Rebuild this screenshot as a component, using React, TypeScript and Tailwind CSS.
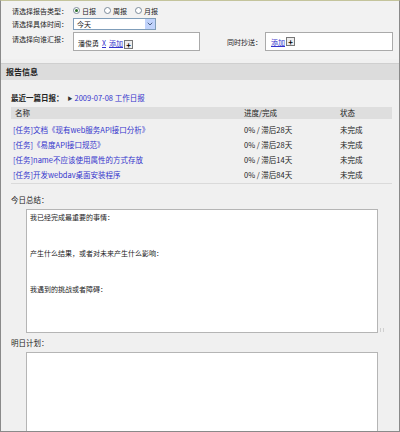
import { ChevronDown } from "lucide-react";

const TASKS = [
  { name: "[任务]文档《现有web服务API接口分析》", progress: "0% / 滞后28天", status: "未完成" },
  { name: "[任务]《易度API接口规范》", progress: "0% / 滞后28天", status: "未完成" },
  { name: "[任务]name不应该使用属性的方式存放", progress: "0% / 滞后14天", status: "未完成" },
  { name: "[任务]开发webdav桌面安装程序", progress: "0% / 滞后84天", status: "未完成" },
];

function Radio({ checked, label }: { checked?: boolean; label: string }) {
  return (
    <span className="flex items-center gap-[2px] mr-[8px]">
      <span className="w-[7px] h-[7px] rounded-full border border-[#7a8a99] bg-white flex items-center justify-center">
        {checked && <span className="w-[3px] h-[3px] rounded-full bg-[#2a6e2a]" />}
      </span>
      {label}
    </span>
  );
}

function AddButton() {
  return (
    <span className="ml-[1px] w-[9px] h-[9px] border border-[#777] bg-[#eee] flex items-center justify-center text-[8px] leading-none font-bold text-black">
      +
    </span>
  );
}

export default function App() {
  return (
    <div className="w-[400px] h-[432px] overflow-hidden bg-[#f0f0f0] border-x border-[#8a8a8a] border-t border-t-[#c4c49c] border-b border-b-[#8a8a8a] font-['SimSun','Noto_Sans_CJK_SC',sans-serif] text-[7px] leading-[12px] text-[#222]">
      {/* report form */}
      <div className="pl-[11px] pr-[6px] pt-[3px] bg-[#f2f2f2]">
        <div className="flex items-center h-[13px]">
          <span className="w-[61px]">请选择报告类型：</span>
          <Radio checked label="日报" />
          <Radio label="周报" />
          <Radio label="月报" />
        </div>
        <div className="flex items-center h-[13px]">
          <span className="w-[61px]">请选择具体时间：</span>
          <div className="w-[83px] h-[12px] border border-[#7f9db9] bg-white flex items-center justify-between pl-[3px]">
            今天
            <span className="w-[10px] h-[10px] bg-[#c1d3fb] flex items-center justify-center">
              <ChevronDown size={8} strokeWidth={3} className="text-[#4d6185]" />
            </span>
          </div>
        </div>
        <div className="flex mt-[2px] h-[19px] whitespace-nowrap">
          <span className="w-[61px] pt-[1px]">请选择向谁汇报：</span>
          <div className="w-[127px] h-[19px] border border-[#aaa] bg-white flex items-end pb-[1px] pl-[4px]">
            <span className="flex items-center gap-[3px]">
              潘俊勇
              <span className="text-[#3333cc] underline">X</span>
              <span className="text-[#3333cc] underline">添加</span>
            </span>
            <AddButton />
          </div>
          <span className="ml-[27px] pt-[4px] w-[37px]">同时抄送：</span>
          <div className="ml-[1px] w-[128px] h-[19px] border border-[#aaa] bg-white flex items-center pl-[5px]">
            <span className="text-[#3333cc] underline">添加</span>
            <AddButton />
          </div>
        </div>
        <div className="h-[8px]" />
      </div>

      {/* section header */}
      <div className="mt-[4px] h-[17px] bg-[#dcdcdc] border-t border-[#cfcfcf] flex items-center pl-[5px] font-bold text-[8px]">
        报告信息
      </div>

      <div className="px-[10px] pt-[12px] text-[7.5px]">
        <div className="flex items-center h-[12px] whitespace-nowrap">
          <span className="font-bold">最近一篇日报：</span>
          <span className="ml-[4px] text-[5px] text-[#333]">▶</span>
          <span className="ml-[2px] text-[#3333cc]">2009-07-08 工作日报</span>
        </div>

        <div className="mt-[3px] mr-[-3px] whitespace-nowrap">
          <div className="flex h-[12px] items-center bg-[#dedede] pl-[4px]">
            <span className="w-[229px]">名称</span>
            <span className="w-[96px]">进度/完成</span>
            <span>状态</span>
          </div>
          <div className="pt-[3px] pb-[1px] border-b border-[#dadada]">
            {TASKS.map((t) => (
              <div key={t.name} className="flex h-[15px] items-center pl-[2px]">
                <span className="w-[231px] text-[#3333cc]">{t.name}</span>
                <span className="w-[96px]">{t.progress}</span>
                <span>{t.status}</span>
              </div>
            ))}
          </div>
        </div>

        <div className="mt-[10px]">今日总结：</div>
        <div className="flex items-end text-[7px]">
          <div className="ml-[15px] mt-[3px] w-[352px] h-[124px] border border-[#b5b5b5] bg-white px-[3px] pt-[1px] leading-[12px]">
            <div>我已经完成最重要的事情：</div>
            <div className="h-[24px]" />
            <div>产生什么结果，或者对未来产生什么影响：</div>
            <div className="h-[24px]" />
            <div>我遇到的挑战或者障碍：</div>
          </div>
          <span className="ml-[2px] mb-[1px] w-[4px] h-[4px] border-l border-r border-[#d0d0d0]" />
        </div>

        <div className="mt-[4px]">明日计划：</div>
        <div className="ml-[15px] mt-[3px] w-[352px] h-[90px] border border-[#b5b5b5] bg-white" />
      </div>
    </div>
  );
}
